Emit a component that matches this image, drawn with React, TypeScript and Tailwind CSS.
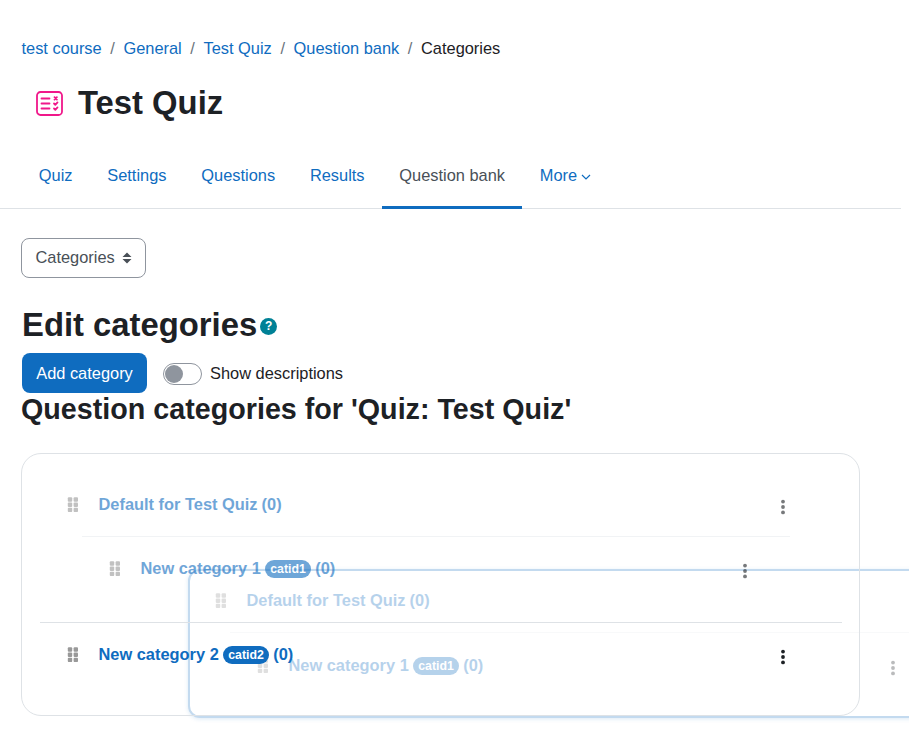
import React from "react";

const TABS = ["Quiz", "Settings", "Questions", "Results"];

const DragIcon: React.FC = () => (
    <svg width="12" height="15" viewBox="0 0 12 15" className="shrink-0 text-[#999999]" fill="currentColor">
        <rect x="0.8" y="0.3" width="4.4" height="4.4" rx="1" />
        <rect x="6.6" y="0.3" width="4.4" height="4.4" rx="1" />
        <rect x="0.8" y="5.5" width="4.4" height="4.4" rx="1" />
        <rect x="6.6" y="5.5" width="4.4" height="4.4" rx="1" />
        <rect x="0.8" y="10.7" width="4.4" height="4.4" rx="1" />
        <rect x="6.6" y="10.7" width="4.4" height="4.4" rx="1" />
    </svg>
);

const DotsIcon: React.FC = () => (
    <svg width="6" height="16" viewBox="0 0 6 16" className="shrink-0 text-[#1d2125]" fill="currentColor">
        <circle cx="3" cy="2.6" r="1.9" />
        <circle cx="3" cy="8" r="1.9" />
        <circle cx="3" cy="13.4" r="1.9" />
    </svg>
);

const CategoryRow: React.FC<{ name: string; badge?: string; indent?: boolean }> = ({ name, badge, indent }) => (
    <div className={indent ? "flex h-[85px] pl-[26.5px] pr-[94px]" : "flex h-[63px] pl-[26.5px] pr-[56px]"}>
        <div className={indent ? "flex-1 flex items-start pt-[24px] pl-[42px]" : "flex-1 flex items-start pt-[24px]"}>
            <DragIcon />
            <span className="ml-[20px] -mt-[5px] text-[16.4px] leading-[24px] font-bold text-[#0f6cbf] flex items-center">
                {name}
                {badge && (
                    <span className="ml-[4px] mt-[1px] h-[18px] px-[5.5px] rounded-full bg-[#0f6cbf] text-white text-[12.3px] leading-[18px]">{badge}</span>
                )}
                <span className="ml-[4px]">(0)</span>
            </span>
        </div>
        <div className="pt-[26px]">
            <DotsIcon />
        </div>
    </div>
);

const FirstCategory: React.FC<{ subClassName?: string }> = ({ subClassName }) => (
    <>
        <CategoryRow name="Default for Test Quiz" />
        <div className="mx-[42px] mr-[52px] border-t border-[#e9ecef]" />
        <div className={subClassName}>
            <CategoryRow name="New category 1" badge="catid1" indent />
        </div>
    </>
);

export default function App() {
    return (
        <div className="relative isolate w-[909px] h-[751px] overflow-hidden bg-white text-[#1d2125] font-['Liberation_Sans',Arial,sans-serif]">
            <nav className="flex items-center gap-[8.6px] pt-[36px] pl-[21.5px] text-[16.4px] leading-[24px] text-[#6a737b]">
                <a className="text-[#0f6cbf]">test course</a>
                <span>/</span>
                <a className="text-[#0f6cbf]">General</a>
                <span>/</span>
                <a className="text-[#0f6cbf]">Test Quiz</a>
                <span>/</span>
                <a className="text-[#0f6cbf]">Question bank</a>
                <span>/</span>
                <span className="text-[#1d2125]">Categories</span>
            </nav>

            <header className="flex items-center mt-[24px] pl-[36px] h-[38px]">
                <svg width="27" height="25" viewBox="0 0 27 25" fill="none" stroke="#f0188a" strokeWidth="1.8" strokeLinecap="round" strokeLinejoin="round">
                    <rect x="1" y="1" width="25" height="23" rx="3.5" />
                    <path d="M5.5 7.5h8M5.5 12.5h8M5.5 17.5h8" />
                    <path d="M18.5 6.2l2.4 2.4M20.9 6.2l-2.4 2.4" />
                    <path d="M18 12.5l1.3 1.3 2.2-2.4M18 17.5l1.3 1.3 2.2-2.4" />
                </svg>
                <h1 className="ml-[15px] text-[32.8px] leading-[38px] font-bold">Test Quiz</h1>
            </header>

            <div className="flex w-[901px] h-[66px] mt-[21px] pl-[21.4px] border-b border-[#dee2e6] text-[16.4px]">
                {TABS.map((tab) => (
                    <a key={tab} className="flex items-center px-[17.4px] text-[#0f6cbf]">{tab}</a>
                ))}
                <a className="flex items-center px-[17.4px] text-[#495057] border-b-[3px] border-[#0f6cbf] h-[66px] pt-[1px]">Question bank</a>
                <a className="flex items-center px-[17.4px] text-[#0f6cbf]">
                    More
                    <svg width="10" height="6" viewBox="0 0 10 6" className="ml-[4px] mt-[2px]" fill="none" stroke="currentColor" strokeWidth="1.2">
                        <path d="M1 1l4 4 4-4" />
                    </svg>
                </a>
            </div>

            <div className="mt-[29px] ml-[21px] w-[125px] h-[40px] flex items-center pl-[13.5px] pb-[2px] border border-[#8f959e] rounded-[8px] text-[16.4px] text-[#495057]">
                Categories
                <svg width="10" height="12" viewBox="0 0 10 12" className="ml-[7.5px] mt-[2px]" fill="currentColor">
                    <path d="M5 0.5L9.5 5H0.5zM5 11.5L0.5 7H9.5z" />
                </svg>
            </div>

            <div className="flex items-center mt-[27px] ml-[22px] h-[40px]">
                <h2 className="text-[32.8px] leading-[40px] font-bold">Edit categories</h2>
                <span className="ml-[3px] mt-[3px] w-[17px] h-[17px] rounded-full bg-[#008196] text-white text-[12px] leading-[17px] font-bold text-center">?</span>
            </div>

            <div className="flex items-center mt-[8px] ml-[22px]">
                <button className="w-[125px] h-[40px] rounded-[8px] bg-[#0f6cbf] text-white text-[16.4px]">Add category</button>
                <span className="ml-[16px] mt-[1px] w-[39px] h-[22px] rounded-full border border-[#8f959e] flex items-center pl-[1px]">
                    <span className="w-[18px] h-[18px] rounded-full bg-[#8f959e]" />
                </span>
                <span className="ml-[8px] text-[16.4px]">Show descriptions</span>
            </div>

            <h3 className="ml-[21px] text-[28.7px] leading-[32px] font-bold">Question categories for 'Quiz: Test Quiz'</h3>

            <div className="mt-[28px] ml-[21px] w-[839px] h-[263px] border border-[#dee2e6] rounded-[20px] pt-[19px] pl-[18px]">
                <div className="w-[802px] h-[150px] border-b border-[#dee2e6]">
                    <div className="opacity-60">
                        <FirstCategory />
                    </div>
                </div>
                <div className="w-[802px]">
                    <CategoryRow name="New category 2" badge="catid2" />
                </div>
            </div>

            <div className="absolute -z-10 left-[188px] top-[569px] w-[802px] h-[149px] border-2 border-[#0f6cbf]/25 rounded-[12px] shadow-[0_1px_4px_rgba(15,108,191,0.15)]">
                <div className="-ml-[2px] -mt-[2px] w-[802px] opacity-30">
                    <FirstCategory subClassName="mt-[1px]" />
                </div>
            </div>
        </div>
    );
}
